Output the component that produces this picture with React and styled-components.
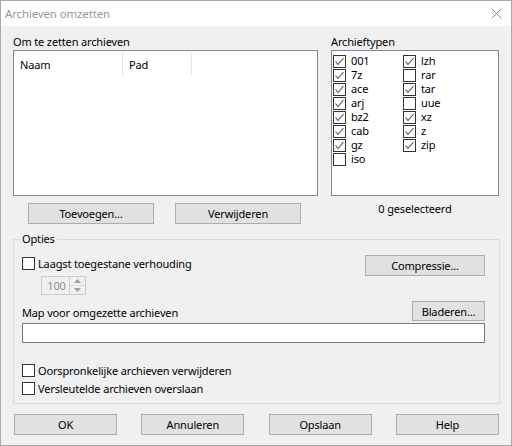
import styled, { createGlobalStyle } from "styled-components";

const GlobalStyle = createGlobalStyle`
  html, body {
    margin: 0;
    padding: 0;
    background: #ffffff;
  }
  * {
    box-sizing: border-box;
  }
`;

const typesLeft = [
  { name: "001", checked: true },
  { name: "7z", checked: true },
  { name: "ace", checked: true },
  { name: "arj", checked: true },
  { name: "bz2", checked: true },
  { name: "cab", checked: true },
  { name: "gz", checked: true },
  { name: "iso", checked: false },
];

const typesRight = [
  { name: "lzh", checked: true },
  { name: "rar", checked: false },
  { name: "tar", checked: true },
  { name: "uue", checked: false },
  { name: "xz", checked: true },
  { name: "z", checked: true },
  { name: "zip", checked: true },
];

function Check({ checked }) {
  return (
    <CheckBox>
      {checked && (
        <svg width="11" height="11" viewBox="0 0 11 11">
          <polyline
            points="1.5,5.5 4,8.5 9.5,2"
            fill="none"
            stroke="#4d4d4d"
            strokeWidth="1.1"
          />
        </svg>
      )}
    </CheckBox>
  );
}

function App() {
  return (
    <>
      <GlobalStyle />
      <Window>
        <TitleBar>
          <Title>Archieven omzetten</Title>
          <svg width="11" height="11" viewBox="0 0 11 11">
            <path d="M0.5 0.5 L10.5 10.5 M10.5 0.5 L0.5 10.5" stroke="#8a8a8a" strokeWidth="1" />
          </svg>
        </TitleBar>

        <Body>
          <Top>
            <Column>
              <Label>Om te zetten archieven</Label>
              <ListBox>
                <Header>
                  <HeaderCell $width={109}>Naam</HeaderCell>
                  <HeaderCell $width={69}>Pad</HeaderCell>
                </Header>
              </ListBox>
              <ListButtons>
                <Button $width={126}>Toevoegen...</Button>
                <Button $width={126}>Verwijderen</Button>
              </ListButtons>
            </Column>

            <Column>
              <Label>Archieftypen</Label>
              <TypesBox>
                {[...typesLeft, ...typesRight].map((t) => (
                  <TypeItem key={t.name}>
                    <Check checked={t.checked} />
                    <TypeName>{t.name}</TypeName>
                  </TypeItem>
                ))}
              </TypesBox>
              <Selected>0 geselecteerd</Selected>
            </Column>
          </Top>

          <Group>
            <Legend>Opties</Legend>
            <RatioRow>
              <CheckRow $offset={2}>
                <Check />
                <span>Laagst toegestane verhouding</span>
              </CheckRow>
              <Button $width={120}>Compressie...</Button>
            </RatioRow>
            <Spin>
              <SpinValue>100</SpinValue>
              <SpinButtons>
                <SpinArrow>
                  <svg width="7" height="4" viewBox="0 0 7 4">
                    <polygon points="0,4 3.5,0 7,4" fill="#a0a0a0" />
                  </svg>
                </SpinArrow>
                <SpinArrow $bottom>
                  <svg width="7" height="4" viewBox="0 0 7 4">
                    <polygon points="0,0 3.5,4 7,0" fill="#a0a0a0" />
                  </svg>
                </SpinArrow>
              </SpinButtons>
            </Spin>
            <FolderRow>
              <FieldLabel>Map voor omgezette archieven</FieldLabel>
              <Button $width={73} $height={20}>
                Bladeren...
              </Button>
            </FolderRow>
            <TextInput />
            <Checks>
              <CheckLine>
                <Check />
                <span>Oorspronkelijke archieven verwijderen</span>
              </CheckLine>
              <CheckLine>
                <Check />
                <span>Versleutelde archieven overslaan</span>
              </CheckLine>
            </Checks>
          </Group>

          <Footer>
            <Button $width={103}>OK</Button>
            <Button $width={103}>Annuleren</Button>
            <Button $width={103}>Opslaan</Button>
            <Button $width={103}>Help</Button>
          </Footer>
        </Body>
      </Window>
    </>
  );
}

export default App;

const Window = styled.div`
  width: 512px;
  height: 446px;
  border: 1px solid #aaaaaa;
  background: #f0f0f0;
  display: flex;
  flex-direction: column;
  font-family: "Noto Sans", "Open Sans", sans-serif;
  font-size: 11px;
  letter-spacing: -0.15px;
  color: #000000;
`;

const TitleBar = styled.div`
  height: 25px;
  background: #ffffff;
  display: flex;
  align-items: center;
  justify-content: space-between;
  padding: 0 9px 0 4px;
`;

const Title = styled.div`
  color: #999999;
  font-size: 11.5px;
`;

const Body = styled.div`
  flex: 1;
  display: flex;
  flex-direction: column;
  padding: 8px 11px 9px 12px;
`;

const Top = styled.div`
  display: grid;
  grid-template-columns: 305px 168px;
  column-gap: 13px;
`;

const Column = styled.div`
  display: flex;
  flex-direction: column;
`;

const Label = styled.div`
  height: 16px;
  line-height: 16px;
`;

const ListBox = styled.div`
  height: 146px;
  background: #ffffff;
  border: 1px solid #828790;
  padding-top: 1px;
`;

const Header = styled.div`
  display: flex;
  height: 24px;
`;

const HeaderCell = styled.div`
  width: ${(p) => p.$width}px;
  border-right: 1px solid #e5e5e5;
  padding-left: 6px;
  display: flex;
  align-items: center;
`;

const ListButtons = styled.div`
  display: flex;
  gap: 21px;
  margin-top: 7px;
  padding-left: 15px;
`;

const Button = styled.button`
  width: ${(p) => p.$width}px;
  height: ${(p) => p.$height || 21}px;
  background: #e1e1e1;
  border: 1px solid #adadad;
  border-radius: 0;
  padding: 0;
  font-family: inherit;
  font-size: inherit;
  letter-spacing: inherit;
  color: #000000;
  display: flex;
  align-items: center;
  justify-content: center;
`;

const TypesBox = styled.div`
  height: 146px;
  background: #ffffff;
  border: 1px solid #828790;
  padding: 3px 0 0 1px;
  display: grid;
  grid-template-columns: 70px 70px;
  grid-template-rows: repeat(8, 14px);
  grid-auto-flow: column;
`;

const TypeItem = styled.div`
  display: flex;
  align-items: center;
  gap: 5px;
  height: 14px;
`;

const TypeName = styled.span`
  line-height: 12px;
`;

const CheckBox = styled.span`
  width: 13px;
  height: 13px;
  flex: none;
  background: #ffffff;
  border: 1px solid #333333;
  display: flex;
  align-items: center;
  justify-content: center;
`;

const Selected = styled.div`
  margin-top: 5px;
  line-height: 16px;
  text-align: center;
`;

const Group = styled.fieldset`
  margin: 7px 0 0 0;
  border: 1px solid #dcdcdc;
  padding: 0 14px 6px 8px;
  min-width: 0;
  display: flex;
  flex-direction: column;
`;

const Legend = styled.legend`
  padding: 0 2px;
  margin-left: -2px;
  line-height: 16px;
`;

const RatioRow = styled.div`
  display: flex;
  justify-content: space-between;
  align-items: flex-start;
  margin-top: 8px;
`;

const CheckRow = styled.div`
  display: flex;
  align-items: center;
  gap: 3px;
  margin-top: ${(p) => p.$offset || 0}px;
  line-height: 13px;
`;

const Spin = styled.div`
  width: 45px;
  height: 19px;
  margin-left: 19px;
  border: 1px solid #cccccc;
  display: flex;
`;

const SpinValue = styled.div`
  flex: 1;
  display: flex;
  align-items: center;
  justify-content: center;
  color: #8a8a8a;
  padding-left: 2px;
`;

const SpinButtons = styled.div`
  width: 16px;
  border-left: 1px solid #cccccc;
  display: flex;
  flex-direction: column;
`;

const SpinArrow = styled.div`
  flex: 1;
  display: flex;
  align-items: center;
  justify-content: center;
  border-top: ${(p) => (p.$bottom ? "1px solid #dddddd" : "none")};
`;

const FolderRow = styled.div`
  display: flex;
  justify-content: space-between;
  align-items: flex-end;
  margin-top: 6px;
`;

const FieldLabel = styled.div`
  line-height: 16px;
`;

const TextInput = styled.div`
  height: 20px;
  margin-top: 2px;
  background: #ffffff;
  border: 1px solid #7a7a7a;
`;

const Checks = styled.div`
  display: flex;
  flex-direction: column;
  margin-top: 18px;
`;

const CheckLine = styled.div`
  height: 18px;
  display: flex;
  align-items: center;
  gap: 3px;
`;

const Footer = styled.div`
  display: flex;
  justify-content: space-between;
  margin-top: 10px;
  padding: 0 1px;
`;
